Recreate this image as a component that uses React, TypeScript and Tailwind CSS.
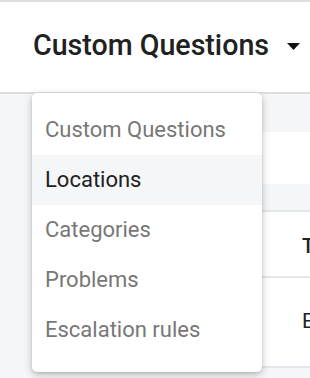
import React from "react";

export default function App() {
  const items = [
    { label: "Custom Questions", active: false },
    { label: "Locations", active: true },
    { label: "Categories", active: false },
    { label: "Problems", active: false },
    { label: "Escalation rules", active: false },
  ];
  return (
    <div
      className="relative w-[310px] h-[378px] overflow-hidden bg-[#f5f6f8]"
      style={{ fontFamily: "Roboto, 'Noto Sans', sans-serif" }}
    >
      <div className="h-[2px] bg-[#dedede]" />
      <header className="h-[90px] bg-white flex items-center pl-[33px] pb-[4px]">
        <span className="text-[28.6px] font-medium text-[#212121] leading-none whitespace-nowrap">
          Custom Questions
        </span>
        <svg className="ml-[18px] mt-[2px]" width="13" height="7" viewBox="0 0 13 7">
          <path d="M0 0 L13 0 L6.5 7 Z" fill="#111" />
        </svg>
      </header>
      <div className="h-[2px] bg-[#dedede]" />
      <main className="flex flex-col">
        <div className="h-[38px]" />
        <div className="h-[52px] bg-white ml-[40px]" />
        <div className="h-[26px]" />
        <div className="ml-[40px] bg-white border-y-2 border-[#e3e6ea]">
          <div className="grid grid-cols-[262px_1fr] h-[66px] items-center border-b-2 border-[#e3e6ea]">
            <div />
            <div className="text-[20px] font-medium text-[#212121] whitespace-nowrap overflow-hidden pt-[4px]">Type</div>
          </div>
          <div className="grid grid-cols-[262px_1fr] h-[88px] items-center">
            <div />
            <div className="text-[21px] text-[#212121] whitespace-nowrap overflow-hidden">Email</div>
          </div>
        </div>
      </main>
      <div className="absolute left-[32px] top-[93px] w-[230px] h-[279px] bg-white rounded-[5px] shadow-[0_3px_8px_rgba(0,0,0,0.22),0_1px_3px_rgba(0,0,0,0.12)] pt-[12px]">
        {items.map((it) => (
          <div
            key={it.label}
            className={`h-[50px] flex items-center pl-[13px] text-[22px] leading-none whitespace-nowrap ${
              it.active ? "bg-[#f5f6f8] text-[#212121]" : "text-[#777777]"
            }`}
          >
            {it.label}
          </div>
        ))}
      </div>
    </div>
  );
}
